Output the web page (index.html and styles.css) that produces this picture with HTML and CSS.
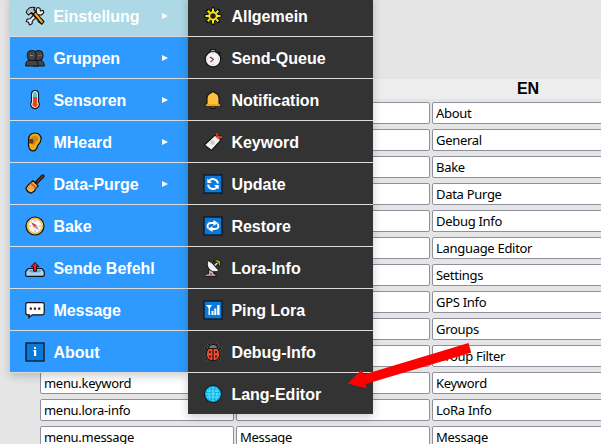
FILE: index.html
```html
<!DOCTYPE html>
<html lang="de">
<head>
<meta charset="utf-8">
<title>Lang-Editor</title>
<link rel="stylesheet" href="styles.css">
</head>
<body>
<main class="editor">
  <div class="head"><span></span><span></span><span>EN</span></div>
  <div class="grid">
    <div class="field"></div><div class="field"></div><div class="field">About</div>
    <div class="field"></div><div class="field"></div><div class="field">General</div>
    <div class="field"></div><div class="field"></div><div class="field">Bake</div>
    <div class="field"></div><div class="field"></div><div class="field">Data Purge</div>
    <div class="field"></div><div class="field"></div><div class="field">Debug Info</div>
    <div class="field"></div><div class="field"></div><div class="field">Language Editor</div>
    <div class="field"></div><div class="field"></div><div class="field">Settings</div>
    <div class="field"></div><div class="field"></div><div class="field">GPS Info</div>
    <div class="field"></div><div class="field"></div><div class="field">Groups</div>
    <div class="field"></div><div class="field"></div><div class="field">Group Filter</div>
    <div class="field">menu.keyword</div><div class="field"></div><div class="field">Keyword</div>
    <div class="field">menu.lora-info</div><div class="field"></div><div class="field">LoRa Info</div>
    <div class="field">menu.message</div><div class="field">Message</div><div class="field">Message</div>
  </div>
</main>

<nav class="menus">
  <ul class="menu main">
    <li class="active"><svg viewBox="0 0 20 20"><g stroke="#111" stroke-width="1.1" stroke-linejoin="round"><path d="M12.500 1.500l2.500.8.300 2.700 2.800-.6.700 2.300-2.300 2.300-2.600-.2-6.600 6.300-.2 2.700-2.700 1.100-.7-2.600-2.500-.8 1-2.400 3-.4 6.200-6.500-.2-2.700z" fill="#edf0f6"/><path d="M4 3.500L7 6.500l5.500 5 2.500 1 3.500 2.500-1.500 3-3.500-2-1-2.500-7-7z" fill="#edf0f6"/><path d="M8 7.500l2.300-2 8.700 10.300-2.400 2.400z" fill="#fcaa16"/><path d="M1.200 6.500C2 2.500 5.500.5 10 1.600L8.800 3.500l2 2L8.200 8 6.500 6.600 3.500 9z" fill="#b7bdc0"/></g></svg><span>Einstellung</span><i></i></li>
    <li><svg viewBox="0 0 20 20"><g fill="#444" stroke="#111"><path d="M8 18c0-5 2-6 5.500-6s5.800 1.500 5.800 6z"/><path d="M.7 18c0-5 2-6 6-6s6.500 1.500 6.500 6z"/><rect x="9" y="2.500" width="9" height="10" rx="4"/><rect x="2.300" y="2.500" width="9" height="10" rx="4"/></g><path d="M5 7.500h3m5.500 0h1m1 0h1" stroke="#888" fill="none"/></svg><span>Gruppen</span><i></i></li>
    <li><svg viewBox="0 0 20 20"><path d="M6.500 4a3.500 3.500 0 0 1 7 0v8a4.200 4.200 0 1 1-7 0z" fill="#fff" stroke="#111" stroke-width="1.200"/><path d="M8 3.800a2 2 0 0 1 4 0V7H8z" fill="#4cc8ec"/><path d="M8 7h4v5.500a2.700 2.700 0 1 1-4 0z" fill="#ee4322"/></svg><span>Sensoren</span><i></i></li>
    <li><svg viewBox="0 0 20 20"><path d="M3.500 8C3.500 3.500 6 1 10 1s6.300 3 6.100 6.500c-.3 3.500-3 4.500-3.700 7-.8 2.800-2.500 4.700-5 4.300-3.200-.5-3.900-3-3.900-6z" fill="#efaa20" stroke="#111" stroke-width="1.200"/><path d="M6 6c1.500-2.500 5-3 7-.5q1 3-2 4l-2 3.500-3-1z" fill="#c98a12"/><path d="M4.200 7h4v4.500h-4z" fill="#66391d"/></svg><span>MHeard</span><i></i></li>
    <li><svg viewBox="0 0 20 20"><g stroke="#111" stroke-width="1.200" stroke-linejoin="round"><path d="M10.500 8L17 1.200q1.600-.6 2 .8 0 1-1 1.700l-6 6z" fill="#83451e"/><path d="M8 6.800l5.200 5.100-2.700 2.700-1 2.300-3.500 2.300C3.500 18.500 1.800 17 .8 14.300l2.500-3.500z" fill="#f8ba57"/></g><path d="M5.500 9l5.500 5" stroke="#e9511b" stroke-width="2"/><path d="M3 13l3 3m-2-5l4 4" stroke="#c87722" stroke-width=".7"/></svg><span>Data-Purge</span><i></i></li>
    <li><svg viewBox="0 0 20 20"><circle cx="10" cy="10" r="9" fill="#f5bd4f" stroke="#111" stroke-width="1.200"/><circle cx="10" cy="10" r="6.400" fill="#fafafa"/><path d="M10 4v2m0 8v2M4 10h2m8 0h2" stroke="#aaa"/><path d="M6 6l5.500 3L9 11.500z" fill="#e53b3b"/><path d="M14 14l-5-2.500L11.500 9z" fill="#9aa1a8"/></svg><span>Bake</span></li>
    <li><svg class="low" viewBox="0 0 20 20"><path d="M.7 12.500l2.500-3h13.600l2.500 3v3.500q0 1.300-1.500 1.300H2.200q-1.500 0-1.500-1.300z" fill="#a8d2ee" stroke="#111" stroke-width="1.200"/><path d="M3.500 12l1-1.200h11l1 1.200-3 1.500h-7z" fill="#5fa5d5"/><path d="M10 3.500l4 4.200h-2.500v4.500h-3V7.700H6z" fill="#e9172b" stroke="#111"/></svg><span>Sende Befehl</span></li>
    <li><svg viewBox="0 0 20 20"><path d="M2.500 2.700h15q1.700 0 1.700 1.700v8.700q0 1.700-1.700 1.700H7.200L3.800 17.600l.5-2.800H2.500q-1.700 0-1.700-1.700V4.400q0-1.700 1.700-1.700z" fill="#fff" stroke="#111" stroke-width="1.200"/><path d="M4.700 8.700h2.200m2 0h2.200m2 0h2.200" stroke="#222" stroke-width="2.200"/></svg><span>Message</span></li>
    <li><svg viewBox="0 0 20 20"><rect x="1" y="1" width="18" height="18" fill="#0c78d7" stroke="#0b1b2b" stroke-width="1.400"/><path d="M9 5h2v2H9zm-.5 3h2.700v6H9V9.500h-.5z" fill="#fff"/></svg><span>About</span></li>
  </ul>
  <ul class="menu sub">
    <li><svg viewBox="0 0 20 20"><g stroke="#111" stroke-width="4" stroke-linecap="round"><path d="M10 2.800v3m0 8.400v3M2.800 10h3m8.400 0h3M4.800 4.800l2 2m6.400 6.400l2 2m0-10.400l-2 2m-6.400 6.400l-2 2"/></g><path d="M10 2.500V6m0 8v3.500M2.500 10H6m8 0h3.500M4.700 4.700l2 2m6.600 6.600l2 2m0-10.600l-2 2m-6.600 6.600l-2 2" stroke="#fbe51b" stroke-width="2"/><circle cx="10" cy="10" r="3.700" fill="#222" stroke="#fbe51b" stroke-width="2"/></svg><span>Allgemein</span></li>
    <li><svg viewBox="0 0 20 20"><path d="M7.500 1.500h5v4h-5zM15 3.500l2.500 2" stroke="#111" stroke-width="1.200" fill="#aeb3b7"/><circle cx="10" cy="11.200" r="7.700" fill="#f3f3f3" stroke="#111" stroke-width="1.200"/><path d="M7 9l3 2" stroke="#444" stroke-width="1.300"/><path d="M11 11l-3.500 3" stroke="#e93940" stroke-width="1.600"/><path d="M10 5v1m0 10v1m5-6h1M4 11h1" stroke="#aaa"/></svg><span>Send-Queue</span></li>
    <li><svg viewBox="0 0 20 20"><path d="M8 17h4v1.500H8z" fill="#f39b16" stroke="#111"/><path d="M8.300 2.700Q10 .5 11.700 2.700C15 3.500 16 6 16 9v4l2 3.500H2L4 13V9c0-3 1-5.500 4.300-6.300z" fill="#fdc13d" stroke="#111" stroke-width="1.100"/><path d="M3.300 14.200h13.400l1 2H2.300z" fill="#f29b19"/></svg><span>Notification</span></li>
    <li><svg viewBox="0 0 20 20"><path d="M11.500 3.500l5.800.5v5L8.500 18.500 1.300 13z" fill="#f1f1f1" stroke="#111" stroke-width="1.200"/><circle cx="9.500" cy="10.500" r="2.200" fill="#ccc"/><path d="M19 5.200l-6-.4m.7-3.300l1 4 2.300 1.700" fill="none" stroke="#e33b20" stroke-width="1.700"/></svg><span>Keyword</span></li>
    <li><svg viewBox="0 0 20 20"><rect x="1" y="1" width="18" height="18" fill="#0c78d7" stroke="#0b1b2b" stroke-width="1.400"/><path d="M6.200 6.800a5 5 0 0 1 8.700 2.700M13.800 13.300a5 5 0 0 1-8.700-2.700" fill="none" stroke="#fff" stroke-width="2"/><path d="M4.300 4.500V9h4.800zM15.700 15.500V11h-4.800z" fill="#fff"/></svg><span>Update</span></li>
    <li><svg viewBox="0 0 20 20"><rect x="1" y="1" width="18" height="18" fill="#0c78d7" stroke="#0b1b2b" stroke-width="1.400"/><path d="M5.500 12.500C3.500 10 4.500 7 8 7h3M14.500 7.500c2 2.500 1 5.500-2.500 5.500H9" fill="none" stroke="#fff" stroke-width="1.900"/><path d="M10.500 4l4.500 3-4.500 3zM9.500 10L5 13l4.500 3z" fill="#fff"/></svg><span>Restore</span></li>
    <li><svg viewBox="0 0 20 20"><path d="M10.500 3.500Q13 .5 16 2t1 6.500L15.500 8q.5-3-1.500-4z" fill="#91b729" stroke="#111"/><path d="M11 8l3.500-3" stroke="#ddd" stroke-width="1.500"/><g stroke="#111"><path d="M6 10l-.5 6H2v2.300h11V16h-2l-1-4z" fill="#bbb"/><path d="M5 2.500l3.500 2L16 12.700c-3.500 2-7.500 1.200-10-1.700C4 8.500 3.600 5 5 2.500z" fill="#f1f1f1"/></g><path d="M7 15h2v2H7z" fill="#e25139"/></svg><span>Lora-Info</span></li>
    <li><svg viewBox="0 0 20 20"><rect x="1" y="1" width="18" height="18" fill="#0c78d7" stroke="#0b1b2b" stroke-width="1.400"/><path d="M3 5h6L7 8v7H5.500V8zM8.500 11h2v4h-2zM11.300 8.500h2V15h-2zM14.200 5h2.300v10h-2.300z" fill="#fff"/></svg><span>Ping Lora</span></li>
    <li><svg viewBox="0 0 20 20"><path d="M7 4L5 1.500M13 4l2-2.500M5 8L2.500 6.500V4.500m12.500 3.500l2.500-1.500V4.500M4 12H1.500m14.500 0h2.500M5 16l-2.500 2m12.500-2l2.500 2" fill="none" stroke="#888" stroke-width="2.200"/><path d="M7 4L5 1.500M13 4l2-2.500M5 8L2.500 6.500V4.500m12.500 3.500l2.500-1.500V4.500M4 12H1.500m14.500 0h2.500M5 16l-2.500 2m12.500-2l2.500 2" fill="none" stroke="#111" stroke-width="1.500"/><path d="M5.500 7q0-4.500 4.500-4.500T14.500 7z" fill="#777" stroke="#111"/><path d="M5.500 6.500h9q4 5.500.5 10.500-5 3.500-10 0-3.500-5 .5-10.500z" fill="#ee4a2c" stroke="#111" stroke-width=".9"/><path d="M10 7v11.500" stroke="#111" stroke-width="1.100"/><path d="M7 9v2m0 2.500v2M13 9v2m0 2.500v2" stroke="#111" stroke-width="1.500"/></svg><span>Debug-Info</span></li>
    <li><svg viewBox="0 0 20 20"><circle cx="10" cy="10" r="8.500" fill="#08b9f0" stroke="#111" stroke-width="1"/><path d="M4 7h12M3 10h14M4 13h12M10 3v14M7 4q-2 6 0 12m6-12q2 6 0 12" fill="none" stroke="#a9edff" stroke-width=".9" stroke-dasharray="1.500 1"/></svg><span>Lang-Editor</span></li>
  </ul>
</nav>
<svg class="pointer" viewBox="0 0 124 46"><path d="M.7 40.500L14.700 26.700l2.400 4.800L121.500 0l2.700 9.700L18.700 41l1.100 4.500z" fill="#f00"/></svg>
</body>
</html>
```
FILE: styles.css
```css
* { box-sizing: border-box; }
html, body { height: 100%; }
body {
  margin: 0;
  overflow: hidden;
  background: #e5e5e5;
  font-family: "Liberation Sans", Arial, sans-serif;
}
.editor {
  width: 588px;
  padding-top: 79px;
  margin-left: 40px;
}
.head, .grid {
  display: grid;
  grid-template-columns: repeat(3, 194px);
  column-gap: 2px;
}
.head {
  height: 20px;
  margin-bottom: 3px;
  background: #ededed;
  font-weight: bold;
  font-size: 16px;
  line-height: 19px;
  text-align: center;
}
.head span { padding-right: 2px; }
.grid { row-gap: 5px; }
.field {
  height: 22px;
  padding-left: 3px;
  border: 1px solid #8f8f9d;
  border-radius: 2px;
  background: #fff;
  color: #000;
  font: 13px/21px "Noto Sans", sans-serif;
  letter-spacing: -.3px;
  white-space: nowrap;
}
.menus {
  position: absolute;
  top: -5px;
  left: 10px;
  display: flex;
  align-items: flex-start;
}
.menu {
  margin: 0;
  padding: 0;
  list-style: none;
  box-shadow: 0 3px 9px rgba(0, 0, 0, .2);
}
.menu li {
  display: flex;
  align-items: center;
  height: 42px;
  padding: 0 20px 0 15px;
  border-bottom: 1px solid #ddd;
  color: #fff;
  font-size: 16px;
  font-weight: bold;
  white-space: nowrap;
}
.menu span { padding: 2px 0 0 .4px; }
.menu svg {
  width: 20px;
  height: 20px;
  margin-right: 8px;
}
.menu .low { margin-top: 3px; }
.main { width: 178px; background: #2e9aff; }
.main .active { background: #add8e6; }
.main i {
  margin-left: auto;
  border-left: 6px solid #fff;
  border-top: 3px solid transparent;
  border-bottom: 3px solid transparent;
}
.sub { width: 185px; background: #333; }
.sub li:last-child { height: 41px; border-bottom: 0; }
.pointer {
  position: absolute;
  left: 347px;
  top: 343px;
  width: 124px;
  height: 46px;
}
```
